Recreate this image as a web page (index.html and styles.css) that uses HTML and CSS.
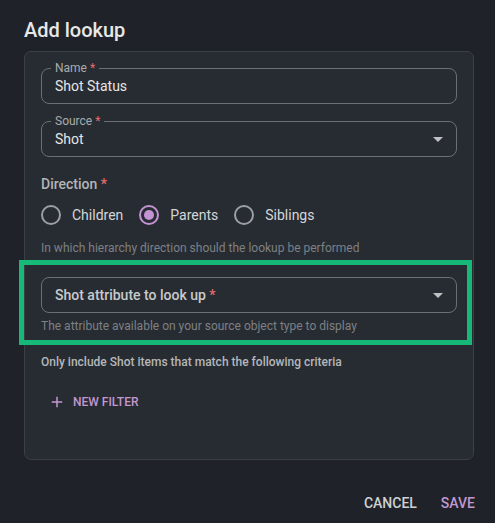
FILE: index.html
```html
<!DOCTYPE html>
<html lang="en">
<head>
<meta charset="utf-8">
<title>Add lookup</title>
<link rel="stylesheet" href="styles.css">
</head>
<body>
<div class="dialog">
  <h2 class="title">Add lookup</h2>
  <div class="card">
    <div class="field">
      <span class="flabel">Name<span class="req">*</span></span>
      <span class="value">Shot Status</span>
    </div>
    <div class="field select">
      <span class="flabel">Source<span class="req">*</span></span>
      <span class="value">Shot</span>
      <svg class="arrow" viewBox="0 0 10 5" width="10" height="5"><path d="M0 0h10L5 5z"/></svg>
    </div>
    <div class="group">
      <div class="glabel">Direction <span class="req">*</span></div>
      <div class="radios">
        <label class="radio"><span class="circle"></span><span>Children</span></label>
        <label class="radio checked"><span class="circle"></span><span>Parents</span></label>
        <label class="radio"><span class="circle"></span><span>Siblings</span></label>
      </div>
      <div class="helper">In which hierarchy direction should the lookup be performed</div>
    </div>
    <div class="focus">
      <div class="field select">
        <span class="placeholder">Shot attribute to look up <span class="req">*</span></span>
        <svg class="arrow" viewBox="0 0 10 5" width="10" height="5"><path d="M0 0h10L5 5z"/></svg>
      </div>
      <div class="helper tight">The attribute available on your source object type to display</div>
      <div class="highlight"></div>
    </div>
    <div class="criteria">Only include Shot items that match the following criteria</div>
    <button class="add" type="button">
      <svg viewBox="0 0 24 24" width="18" height="18"><path d="M19 13h-6v6h-2v-6H5v-2h6V5h2v6h6v2z"/></svg>
      <span>NEW FILTER</span>
    </button>
  </div>
  <div class="actions">
    <button class="btn cancel" type="button">CANCEL</button>
    <button class="btn save" type="button">SAVE</button>
  </div>
</div>
</body>
</html>
```
FILE: styles.css
```css
* { box-sizing: border-box; }
html, body {
  margin: 0;
  height: 100%;
  background: #1f2329;
}
body {
  font-family: Roboto, "Noto Sans", Arial, sans-serif;
  color: #e3e3e3;
}
.dialog {
  padding: 14px 12px 0 24px;
}
.title {
  margin: 0;
  font-size: 20px;
  font-weight: 500;
  line-height: 32px;
  color: #e8e8e8;
}
.card {
  margin: 5px 9px 0 0;
  border: 1px solid #3b4046;
  border-radius: 7px;
  background: #272c32;
  padding: 16px 16px 0 16px;
  height: 409px;
}
.field {
  position: relative;
  height: 36px;
  border: 1px solid #6b6e72;
  border-radius: 8px;
  display: flex;
  align-items: center;
  padding: 0 13px;
}
.field + .field { margin-top: 17px; }
.flabel {
  position: absolute;
  top: -9px;
  left: 9px;
  padding: 0 4px;
  font-size: 12px;
  line-height: 16px;
  color: #a9abad;
  background: #272c32;
}
.req { color: #e26d6d; margin-left: 3px; }
.value {
  font-size: 14px;
  color: #e6e6e6;
}
.placeholder {
  font-size: 14px;
  font-weight: 500;
  color: #c9cacc;
}
.placeholder .req { margin-left: 0; }
.arrow {
  position: absolute;
  right: 13px;
  top: 15px;
  fill: #c0c1c3;
}
.group { margin-top: 17px; }
.glabel {
  font-size: 14px;
  font-weight: 500;
  line-height: 20px;
  color: #b3b5b7;
}
.glabel .req { margin-left: 0; }
.radios {
  display: flex;
  margin-top: 11px;
  height: 20px;
  align-items: center;
}
.radio {
  display: flex;
  align-items: center;
  gap: 11px;
  margin-right: 16px;
  font-size: 14px;
  color: #d5d6d8;
}
.circle {
  width: 20px;
  height: 20px;
  border: 2px solid #9d9fa2;
  border-radius: 50%;
  display: flex;
  align-items: center;
  justify-content: center;
}
.checked .circle { border-color: #c592d3; }
.checked .circle::after {
  content: "";
  width: 10px;
  height: 10px;
  border-radius: 50%;
  background: #c592d3;
}
.helper {
  margin-top: 15px;
  font-size: 12px;
  line-height: 16px;
  color: #7d8084;
}
.focus {
  position: relative;
  margin-top: 21px;
}
.helper.tight { margin-top: 5px; }
.highlight {
  position: absolute;
  top: -17px;
  bottom: -11px;
  left: -22px;
  right: -15px;
  border: 5px solid #16b977;
  pointer-events: none;
}
.criteria {
  margin-top: 20px;
  font-size: 12px;
  font-weight: 500;
  line-height: 16px;
  color: #b5b7b9;
}
.add {
  margin-top: 17px;
  height: 30px;
  display: flex;
  align-items: center;
  gap: 7px;
  padding: 0 8px 0 7px;
  border: 0;
  background: none;
  font-family: inherit;
  font-size: 12px;
  font-weight: 500;
  color: #c397d0;
}
.add svg { fill: #c397d0; }
.actions {
  display: flex;
  justify-content: flex-end;
  gap: 8px;
  margin-top: 25px;
}
.btn {
  height: 36px;
  padding: 0 8px;
  border: 0;
  background: none;
  font-family: inherit;
  font-size: 14px;
  font-weight: 500;
  color: #cfd0d2;
}
.btn.save { color: #c397d0; }
```
